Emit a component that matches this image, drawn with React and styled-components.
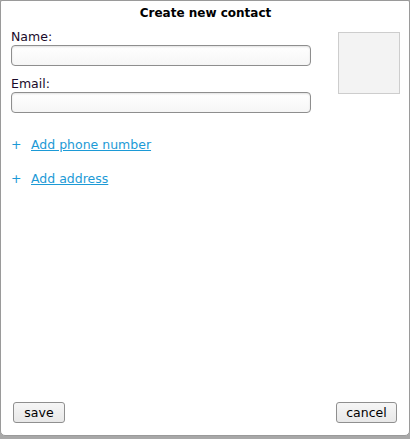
import React from 'react';
import styled, { createGlobalStyle } from 'styled-components';

const GlobalStyle = createGlobalStyle`
  html, body {
    margin: 0;
    padding: 0;
    background: #a8a8a8;
  }
  body {
    font-family: "DejaVu Sans", Verdana, sans-serif;
  }
`;

const Dialog = styled.div`
  box-sizing: border-box;
  width: 410px;
  height: 436px;
  background: #fff;
  border: 1px solid #9a9a9a;
  border-radius: 2px 2px 5px 5px;
  display: flex;
  flex-direction: column;
  padding: 0 9px 0 10px;
`;

const Title = styled.h1`
  margin: 0;
  padding-top: 4px;
  font-size: 12px;
  line-height: 16px;
  font-weight: bold;
  text-align: center;
  color: #000;
`;

const Top = styled.div`
  display: flex;
  justify-content: space-between;
  align-items: flex-start;
  margin-top: 8px;
`;

const Fields = styled.div`
  display: flex;
  flex-direction: column;
  width: 300px;
`;

const Label = styled.label`
  font-size: 12.5px;
  line-height: 15px;
  color: #1a0a2a;
  margin-top: ${p => (p.$first ? '0' : '10px')};
`;

const Input = styled.input`
  box-sizing: border-box;
  height: 21px;
  width: 300px;
  margin-top: 1px;
  border: 1px solid #8e8e8e;
  border-radius: 4px;
  background: linear-gradient(#ffffff, #f6f6f6);
  box-shadow: inset 0 1px 2px rgba(0, 0, 0, 0.12);
  outline: none;
`;

const Photo = styled.div`
  box-sizing: border-box;
  width: 62px;
  height: 62px;
  background: #f3f3f3;
  border: 1px solid #cdcdcd;
  margin-top: 3px;
`;

const Actions = styled.div`
  display: flex;
  flex-direction: column;
  gap: 18px;
  margin-top: 24px;
`;

const ActionRow = styled.div`
  display: flex;
  align-items: center;
  font-size: 12.5px;
  line-height: 16px;
  color: #1c9ad6;
`;

const Plus = styled.span`
  width: 20px;
`;

const ActionLink = styled.a`
  color: #1c9ad6;
  text-decoration: underline;
  cursor: pointer;
`;

const Spacer = styled.div`
  flex: 1;
`;

const Footer = styled.div`
  display: flex;
  justify-content: space-between;
  padding: 0 3px 12px 2px;
`;

const Button = styled.button`
  box-sizing: border-box;
  height: 21px;
  min-width: ${p => p.$w}px;
  padding: 0 8px;
  font-family: "DejaVu Sans", Verdana, sans-serif;
  font-size: 12.5px;
  color: #000;
  background: linear-gradient(#f6f6f6, #e8e8e8);
  border: 1px solid #8f8f8f;
  border-radius: 3px;
`;

export default function App() {
  return (
    <>
      <GlobalStyle />
      <Dialog>
        <Title>Create new contact</Title>
        <Top>
          <Fields>
            <Label $first>Name:</Label>
            <Input type="text" />
            <Label>Email:</Label>
            <Input type="text" />
          </Fields>
          <Photo />
        </Top>
        <Actions>
          <ActionRow>
            <Plus>+</Plus>
            <ActionLink>Add phone number</ActionLink>
          </ActionRow>
          <ActionRow>
            <Plus>+</Plus>
            <ActionLink>Add address</ActionLink>
          </ActionRow>
        </Actions>
        <Spacer />
        <Footer>
          <Button $w={52}>save</Button>
          <Button $w={61}>cancel</Button>
        </Footer>
      </Dialog>
    </>
  );
}
